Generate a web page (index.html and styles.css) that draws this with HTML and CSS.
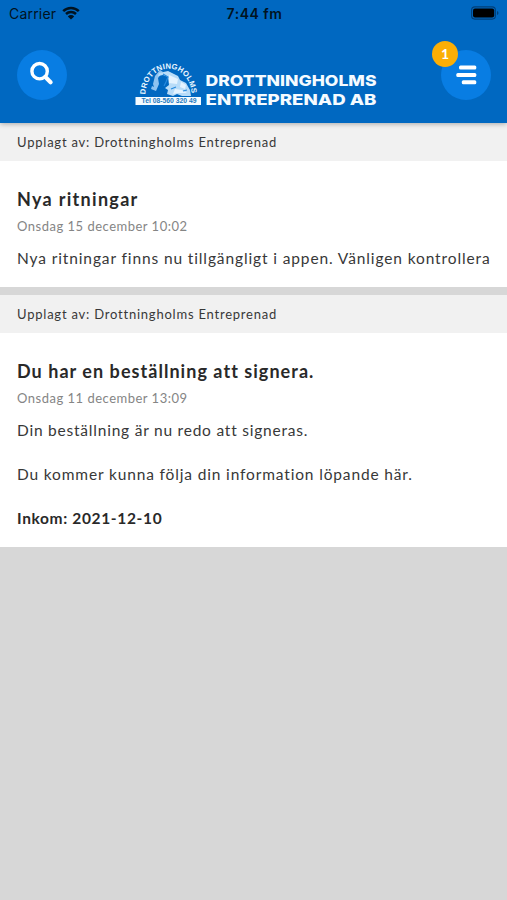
FILE: index.html
```html
<!DOCTYPE html>
<html lang="sv">
<head>
<meta charset="utf-8">
<meta name="viewport" content="width=device-width, initial-scale=1">
<title>Drottningholms Entreprenad</title>
<link rel="stylesheet" href="styles.css">
</head>
<body>
<header class="header">
  <div class="status">
    <div class="carrier">Carrier
      <svg class="wifi" viewBox="0 0 18 14" width="18" height="14"><path d="M1.2 5.1a11.2 11.2 0 0 1 15.6 0M4 8a7.2 7.2 0 0 1 10 0" fill="none" stroke="#001321" stroke-width="2.5"/><path d="M9 13.6 5.8 10.4a4.5 4.5 0 0 1 6.4 0Z" fill="#001321"/></svg>
    </div>
    <div class="clock">7:44 fm</div>
    <svg class="battery" viewBox="0 0 29 14" width="29" height="14"><rect x=".6" y=".9" width="23.8" height="12.2" rx="3.3" fill="none" stroke="#003f78" stroke-width="1.1"/><rect x="2" y="2.4" width="21.2" height="9.2" rx="2" fill="#000"/><path d="M26 5v4q1.5-.5 1.5-2T26 5" fill="#003f78"/></svg>
  </div>
  <nav class="bar">
    <button class="round" aria-label="Sök">
      <svg viewBox="0 0 50 50" width="50" height="50" fill="none" stroke="#fff"><circle cx="22.6" cy="21.2" r="7.7" stroke-width="3.4"/><path d="m28.4 27 5.2 5.2" stroke-width="4.2" stroke-linecap="round"/></svg>
    </button>
    <svg class="logo" viewBox="0 0 246 54" width="246" height="54">
      <defs><path id="arch" d="M10.5 38.5A23 25.8 0 0 1 56.5 38.5"/></defs>
      <text class="arch-text"><textPath href="#arch" textLength="75" lengthAdjust="spacing">DROTTNINGHOLMS</textPath></text>
      <path d="m18 28 2-8 5-6 3 2-5 6 1 6-3 7-5-2 1-3 2 1Z" fill="#8fc3f0"/>
      <path d="m24 17 9-2 10 5 2 4 6 3 4 7 1 6H47l-5-2-4 2-6-2 1-4-3-2 4-3-1-8-5-2-5 1Z" fill="#b8dcf8"/>
      <path d="m34 19 9 4-1 5-8-1Zm12 7 5 3-1 4-5-2ZM40 33l7 1 5 3h-9l-5 1Z" fill="#e4f3ff"/>
      <path d="M28 18l5 3-2 5-2 4M41 31l-5 2M52 34l-4 1" fill="none" stroke="#268ade" stroke-width="1.2"/>
      <rect x=".5" y="41" width="65.5" height="8" fill="#f5fbff"/>
      <text class="phone" x="6.5" y="47.2" textLength="55" lengthAdjust="spacingAndGlyphs">Tel 08-560 320 49</text>
      <text class="name" x="70.5" y="30" textLength="171" lengthAdjust="spacingAndGlyphs">DROTTNINGHOLMS</text>
      <text class="name" x="70.5" y="49" textLength="171" lengthAdjust="spacingAndGlyphs">ENTREPRENAD AB</text>
    </svg>
    <button class="round" aria-label="Meny">
      <svg viewBox="0 0 50 50" width="50" height="50"><g fill="#fff"><rect x="18" y="15.6" width="17.3" height="4" rx="1.5"/><rect x="15.3" y="23" width="20" height="4" rx="1.5"/><rect x="20.8" y="30.3" width="14.5" height="4" rx="1.5"/></g></svg>
      <span class="badge">1</span>
    </button>
  </nav>
</header>
<main>
  <article class="post">
    <div class="author">Upplagt av: Drottningholms Entreprenad</div>
    <div class="content">
      <h2 class="t1">Nya ritningar</h2>
      <time>Onsdag 15 december 10:02</time>
      <p class="p1">Nya ritningar finns nu tillgängligt i appen. Vänligen kontrollera</p>
    </div>
  </article>
  <article class="post">
    <div class="author">Upplagt av: Drottningholms Entreprenad</div>
    <div class="content">
      <h2 class="t2">Du har en beställning att signera.</h2>
      <time>Onsdag 11 december 13:09</time>
      <p class="p2">Din beställning är nu redo att signeras.</p>
      <p class="p3">Du kommer kunna följa din information löpande här.</p>
      <p class="received">Inkom: 2021-12-10</p>
    </div>
  </article>
</main>
</body>
</html>
```

FILE: styles.css
```css
* { box-sizing: border-box; }
body { margin: 0; min-height: 900px; background: #d7d7d7; color: #383838; font-family: Lato, sans-serif; overflow: hidden; }
.header { position: relative; height: 123px; background: #0068c1; box-shadow: 0 1px 5px rgba(0,0,0,.3); }
.status { height: 28px; padding: 0 7px 0 9px; display: grid; grid-template-columns: 1fr auto 1fr; align-items: center; color: #001321; font: 14px/28px Inter, sans-serif; }
.carrier { display: flex; align-items: center; gap: 6px; letter-spacing: .2px; }
.wifi { margin-top: -2px; }
.clock { font-weight: 600; letter-spacing: .5px; }
.battery { justify-self: end; margin-top: -2px; }
.bar { display: flex; justify-content: space-between; align-items: flex-start; padding: 22px 16px 0 17px; }
.round { position: relative; width: 50px; height: 50px; padding: 0; border: 0; border-radius: 50%; background: #087de3; }
.round svg { display: block; }
.badge { position: absolute; left: -9px; top: -9px; width: 26px; height: 26px; border-radius: 50%; background: #fbae05; color: #fff; font: 700 14px/26px Lato, sans-serif; text-align: center; }
.logo { margin: 6px 0 0 8px; }
.arch-text { font: 700 7.7px "Liberation Sans", sans-serif; fill: #e9f6ff; }
.phone { font: 700 6.4px "Liberation Sans", sans-serif; fill: #247ac0; }
.name { font: 800 15.2px Inter, sans-serif; fill: #f5fbff; }
.post + .post { margin-top: 8px; }
.author { height: 38px; padding-left: 17px; background: #f1f1f1; font-size: 13px; line-height: 38px; letter-spacing: .78px; }
.content { background: #fff; padding: 24px 17px 18px; }
h2 { margin: 0; color: #292929; font-size: 18px; line-height: 28px; }
.t1 { letter-spacing: 1.3px; }
.t2 { letter-spacing: 1.04px; }
time { display: block; color: #858585; font-size: 13px; line-height: 26px; letter-spacing: .5px; }
p { margin: 0 0 22px; font-size: 15.5px; line-height: 22px; letter-spacing: .88px; white-space: nowrap; }
time + p { margin-top: 8px; }
.p2 { letter-spacing: .78px; }
.p3 { letter-spacing: .85px; }
p:last-child { margin-bottom: 0; }
.received { font-weight: 700; color: #292929; letter-spacing: .65px; }
```
